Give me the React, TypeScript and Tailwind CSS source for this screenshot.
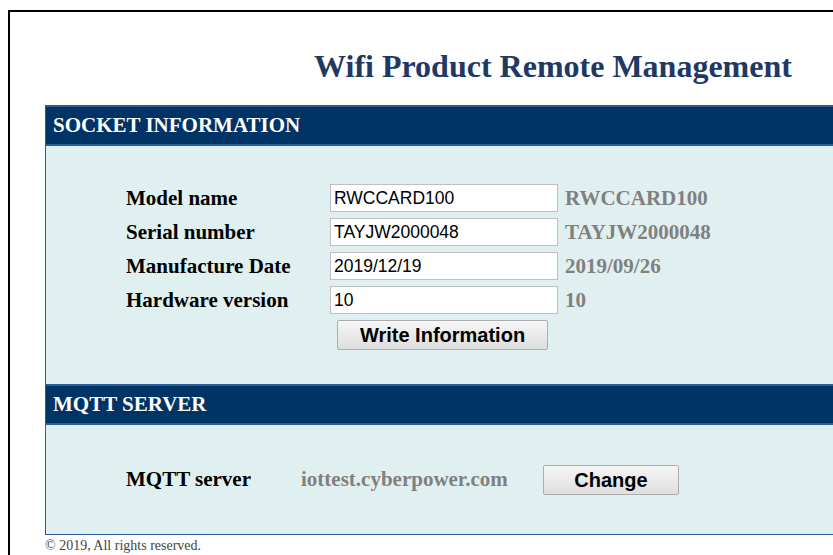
import React, { useState } from 'react';

const serif = "font-['Liberation_Serif','Times_New_Roman',serif]";
const sans = "font-['Liberation_Sans',Arial,sans-serif]";

interface InfoRow {
  label: string;
  value: string;
  current: string;
}

const rows: InfoRow[] = [
  { label: 'Model name', value: 'RWCCARD100', current: 'RWCCARD100' },
  { label: 'Serial number', value: 'TAYJW2000048', current: 'TAYJW2000048' },
  { label: 'Manufacture Date', value: '2019/12/19', current: '2019/09/26' },
  { label: 'Hardware version', value: '10', current: '10' },
];

function SectionHeader({ title }: { title: string }) {
  return (
    <div className="h-[41px] bg-[#003366] border-y-2 border-[#2b5c9a] flex items-center pl-[7px]">
      <span className={`${serif} text-white font-bold text-[21px] leading-none`}>{title}</span>
    </div>
  );
}

function LegacyButton({ children, className = '' }: { children: React.ReactNode; className?: string }) {
  return (
    <button
      className={`${sans} h-[30px] font-bold text-[20px] leading-none text-black border border-[#adadad] rounded-[2px] bg-gradient-to-b from-[#f6f6f6] to-[#dedede] ${className}`}
    >
      {children}
    </button>
  );
}

export default function App() {
  const [values, setValues] = useState(rows.map((r) => r.value));

  return (
    <div className="w-[833px] h-[555px] overflow-hidden bg-white">
      <div className="ml-[8px] mt-[10px] border-l-2 border-t-2 border-black h-[545px] pl-[35px] w-[1100px]">
        <div className="w-[1016px]">
          <h1 className={`${serif} mt-[36px] h-[57px] text-center text-[32px] leading-[36px] font-bold text-[#1f3864]`}>
            Wifi Product Remote Management
          </h1>

          <div className="border-x border-b border-[#2b5c9a] bg-[#e0f0f0]">
            <SectionHeader title="SOCKET INFORMATION" />
            <div className="pt-[38px] pb-[34px] pl-[80px]">
              <div className="flex flex-col gap-[6px]">
                {rows.map((row, i) => (
                  <div key={row.label} className="flex items-center h-[28px]">
                    <span className={`${serif} w-[204px] font-bold text-[21px] text-black leading-none`}>{row.label}</span>
                    <input
                      className={`${sans} w-[228px] h-[28px] border border-[#c0c0c0] bg-white px-[3px] text-[17.5px] text-black outline-none`}
                      value={values[i]}
                      onChange={(e) => {
                        const next = [...values];
                        next[i] = e.target.value;
                        setValues(next);
                      }}
                    />
                    <span className={`${serif} ml-[7px] font-bold text-[21px] text-[#808080] leading-none`}>{row.current}</span>
                  </div>
                ))}
              </div>
              <div className="mt-[6px] pl-[211px]">
                <LegacyButton className="w-[211px]">Write Information</LegacyButton>
              </div>
            </div>

            <SectionHeader title="MQTT SERVER" />
            <div className="h-[109px] flex items-center pl-[80px]">
              <span className={`${serif} w-[175px] font-bold text-[21px] text-black leading-none`}>MQTT server</span>
              <span className={`${serif} w-[242px] font-bold text-[21px] text-[#808080] leading-none`}>iottest.cyberpower.com</span>
              <LegacyButton className="w-[136px]">Change</LegacyButton>
            </div>
          </div>

          <p className={`${serif} text-[14px] leading-[18px] text-[#444444] mt-[2px]`}>© 2019, All rights reserved.</p>
        </div>
      </div>
    </div>
  );
}
